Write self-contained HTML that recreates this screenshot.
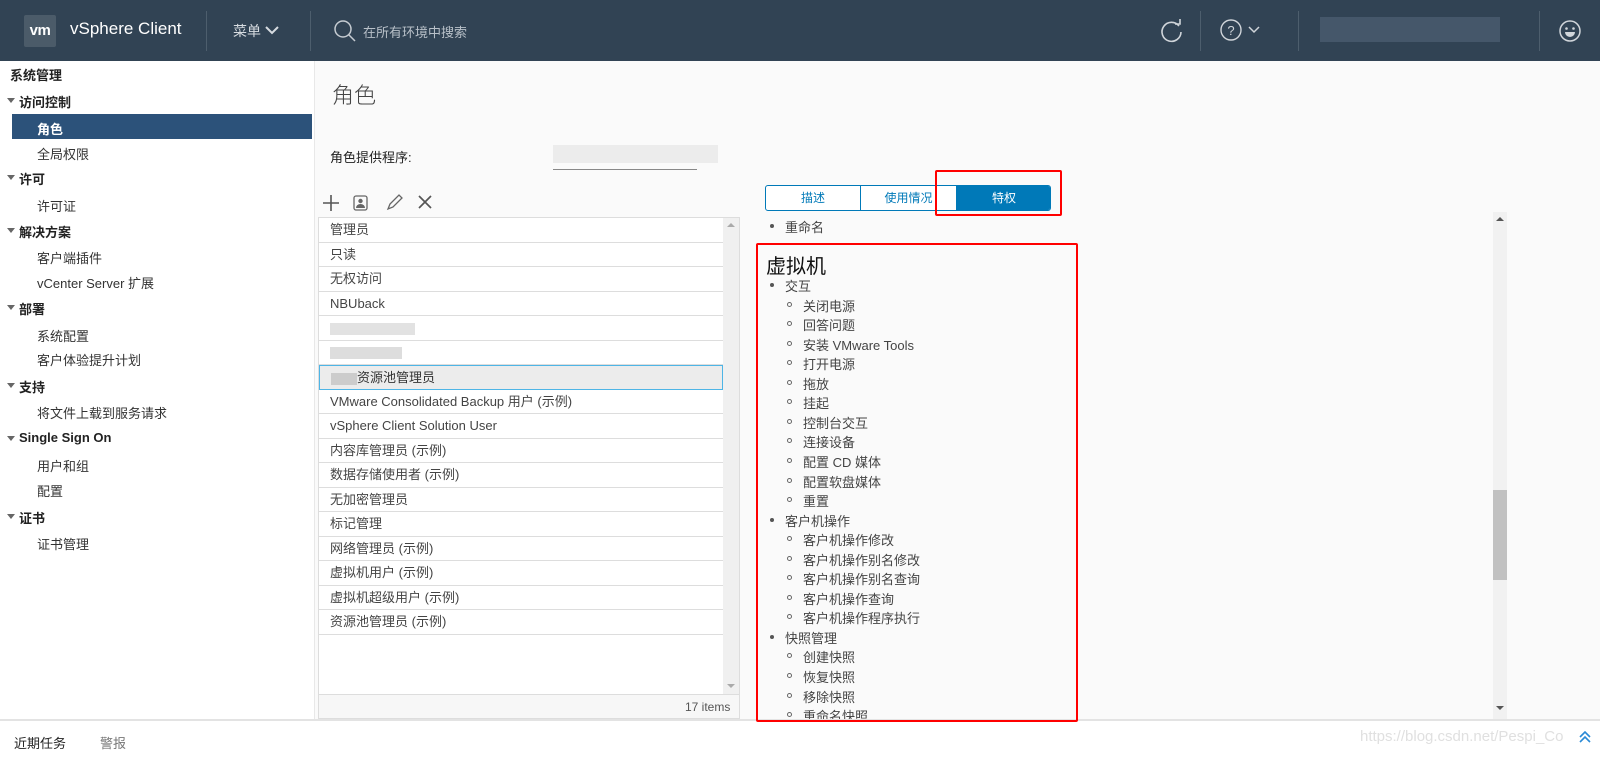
<!DOCTYPE html>
<html><head><meta charset="utf-8"><style>
*{margin:0;padding:0;box-sizing:border-box}
body{width:1600px;height:770px;overflow:hidden;background:#fafafa;font-family:"Liberation Sans","Noto Sans CJK SC",sans-serif;font-size:13px;color:#333;position:relative}
.a{position:absolute;white-space:nowrap}
#hd{position:absolute;left:0;top:0;width:1600px;height:61px;background:#314354}
.sep{position:absolute;top:11px;width:1px;height:40px;background:#4d5e6d}
#sb{position:absolute;left:0;top:61px;width:315px;height:659px;background:#fff;border-right:1px solid #e8e8e8}
.g{font-weight:bold;color:#222}
.tri{position:absolute;left:7px;width:0;height:0;border-left:4px solid transparent;border-right:4px solid transparent;border-top:5px solid #666}
.row{position:absolute;left:319px;width:404px;height:24.5px;border-bottom:1px solid #ddd;padding-left:11px;line-height:24px;color:#444;white-space:nowrap}
.li{position:absolute;white-space:nowrap;color:#444}
.dot{position:absolute;width:4px;height:4px;border-radius:2px;background:#555}
.cir{position:absolute;width:5px;height:5px;border-radius:3px;border:1px solid #666}
</style></head><body>
<div id="hd">
 <div class="a" style="left:24px;top:15px;width:32px;height:32px;background:#4b5b69;border-radius:2px;color:#fff;font-weight:bold;font-size:15px;text-align:center;line-height:31px;letter-spacing:-0.5px">vm</div>
 <div class="a" style="left:70px;top:19px;color:#fff;font-size:17px">vSphere Client</div>
 <div class="sep" style="left:206px"></div>
 <div class="a" style="left:233px;top:21px;color:#d6dbe0;font-size:14px">菜单</div>
 <svg class="a" style="left:265px;top:25px" width="14" height="10"><path d="M1 2l6 6 6-6" stroke="#d6dbe0" stroke-width="2" fill="none"/></svg>
 <div class="sep" style="left:310px"></div>
 <svg class="a" style="left:333px;top:19px" width="24" height="24"><circle cx="10" cy="10" r="8" stroke="#c6ccd2" stroke-width="1.5" fill="none"/><path d="M16 16l6 6" stroke="#c6ccd2" stroke-width="1.5"/></svg>
 <div class="a" style="left:363px;top:22px;color:#b8c0c8;font-size:13px">在所有环境中搜索</div>
 <svg class="a" style="left:1159px;top:18px" width="26" height="26"><path d="M20 8A9.5 9.5 0 1 0 22 14" stroke="#d0d5da" stroke-width="1.6" fill="none"/><path d="M16 6h5V1" stroke="#d0d5da" stroke-width="1.6" fill="none"/></svg>
 <div class="sep" style="left:1200px"></div>
 <svg class="a" style="left:1220px;top:19px" width="24" height="24"><circle cx="11" cy="11" r="10" stroke="#d0d5da" stroke-width="1.4" fill="none"/><text x="11" y="16" font-size="13" fill="#d0d5da" text-anchor="middle" font-family="Liberation Sans">?</text></svg>
 <svg class="a" style="left:1248px;top:26px" width="12" height="8"><path d="M1 1l5 5 5-5" stroke="#d0d5da" stroke-width="1.5" fill="none"/></svg>
 <div class="sep" style="left:1298px"></div>
 <div class="a" style="left:1320px;top:17px;width:180px;height:25px;background:#45576a"></div>
 <div class="sep" style="left:1539px"></div>
 <svg class="a" style="left:1558px;top:19px" width="24" height="24"><circle cx="12" cy="12" r="10" stroke="#d0d5da" stroke-width="1.5" fill="none"/><circle cx="8.5" cy="9.5" r="1.3" fill="#d0d5da"/><circle cx="15.5" cy="9.5" r="1.3" fill="#d0d5da"/><path d="M7 13h10a5 5 0 0 1-10 0z" fill="#d0d5da"/></svg>
</div>
<div id="sb">
 <div class="a g" style="left:10px;top:4px">系统管理</div>
 <div class="tri" style="top:37px"></div><div class="a g" style="left:19px;top:31px">访问控制</div>
 <div class="a" style="left:12px;top:53px;width:300px;height:25px;background:#2c527a"></div>
 <div class="a" style="left:37px;top:58px;color:#fff;font-weight:bold">角色</div>
 <div class="a" style="left:37px;top:83px">全局权限</div>
 <div class="tri" style="top:114px"></div><div class="a g" style="left:19px;top:108px">许可</div>
 <div class="a" style="left:37px;top:135px">许可证</div>
 <div class="tri" style="top:167px"></div><div class="a g" style="left:19px;top:161px">解决方案</div>
 <div class="a" style="left:37px;top:187px">客户端插件</div>
 <div class="a" style="left:37px;top:212px">vCenter Server 扩展</div>
 <div class="tri" style="top:244px"></div><div class="a g" style="left:19px;top:238px">部署</div>
 <div class="a" style="left:37px;top:265px">系统配置</div>
 <div class="a" style="left:37px;top:289px">客户体验提升计划</div>
 <div class="tri" style="top:322px"></div><div class="a g" style="left:19px;top:316px">支持</div>
 <div class="a" style="left:37px;top:342px">将文件上载到服务请求</div>
 <div class="tri" style="top:375px"></div><div class="a g" style="left:19px;top:369px">Single Sign On</div>
 <div class="a" style="left:37px;top:395px">用户和组</div>
 <div class="a" style="left:37px;top:420px">配置</div>
 <div class="tri" style="top:453px"></div><div class="a g" style="left:19px;top:447px">证书</div>
 <div class="a" style="left:37px;top:473px">证书管理</div>
</div>
<div class="a" style="left:332px;top:78px;font-size:22px;color:#444;font-weight:300">角色</div>
<div class="a" style="left:330px;top:147px;color:#222">角色提供程序:</div>
<div class="a" style="left:553px;top:145px;width:165px;height:18px;background:#ececec"></div>
<div class="a" style="left:553px;top:169px;width:144px;height:1px;background:#888"></div>
<svg class="a" style="left:322px;top:194px" width="120" height="18"><path d="M9 1v16M1 9h16" stroke="#555" stroke-width="1.6"/><rect x="32" y="2" width="13" height="14" rx="2" stroke="#666" fill="none" stroke-width="1.3"/><circle cx="38.5" cy="7" r="2.2" fill="#666"/><path d="M34 14a4.5 4 0 0 1 9 0z" fill="#666"/><path d="M66 15l2-5 9-9 3 3-9 9z" stroke="#666" fill="none" stroke-width="1.3"/><path d="M97 2l12 12M109 2L97 14" stroke="#555" stroke-width="1.7"/></svg>
<div class="a" style="left:318px;top:217px;width:422px;height:502px;background:#fff;border:1px solid #ddd"></div>
<div class="a" style="left:723px;top:218px;width:16px;height:478px;background:#f0f0f0"></div>
<div class="a" style="left:319px;top:694px;width:420px;height:24px;background:#f7f7f7;border-top:1px solid #ddd"></div>
<div class="a" style="left:685px;top:700px;color:#555;font-size:12px">17 items</div>
<div class="row" style="top:218px">管理员</div>
<div class="row" style="top:242.5px">只读</div>
<div class="row" style="top:267px">无权访问</div>
<div class="row" style="top:291.5px">NBUback</div>
<div class="row" style="top:316px"><span style="display:inline-block;width:85px;height:12px;background:#e2e2e2;vertical-align:middle"></span></div>
<div class="row" style="top:340.5px"><span style="display:inline-block;width:72px;height:12px;background:#ddd;vertical-align:middle"></span></div>
<div class="row" style="top:365px;background:#ececec;border:1px solid #4eb5e6;color:#333"><span style="display:inline-block;width:26px;height:12px;background:#ccc;vertical-align:middle"></span>资源池管理员</div>
<div class="row" style="top:389.5px">VMware Consolidated Backup 用户 (示例)</div>
<div class="row" style="top:414px">vSphere Client Solution User</div>
<div class="row" style="top:438.5px">内容库管理员 (示例)</div>
<div class="row" style="top:463px">数据存储使用者 (示例)</div>
<div class="row" style="top:487.5px">无加密管理员</div>
<div class="row" style="top:512px">标记管理</div>
<div class="row" style="top:536.5px">网络管理员 (示例)</div>
<div class="row" style="top:561px">虚拟机用户 (示例)</div>
<div class="row" style="top:585.5px">虚拟机超级用户 (示例)</div>
<div class="row" style="top:610px">资源池管理员 (示例)</div>
<div class="a" style="left:765px;top:185px;width:286px;height:26px;border:1px solid #0079b8;border-radius:3px;background:#fff;overflow:hidden">
 <div class="a" style="left:0;top:0;width:95px;height:24px;line-height:24px;text-align:center;color:#0079b8;font-size:12px;border-right:1px solid #0079b8">描述</div>
 <div class="a" style="left:95px;top:0;width:95px;height:24px;line-height:24px;text-align:center;color:#0079b8;font-size:12px">使用情况</div>
 <div class="a" style="left:190px;top:0;width:96px;height:24px;line-height:24px;text-align:center;color:#fff;background:#0079b8;font-size:12px">特权</div>
</div>
<div class="a" style="left:1493px;top:212px;width:14px;height:507px;background:#f1f1f1"></div>
<div class="a" style="left:1493px;top:490px;width:14px;height:90px;background:#c1c1c1"></div>
<svg class="a" style="left:1496px;top:216px" width="8" height="500"><path d="M0 5l4-4 4 4z" fill="#555"/><path d="M0 490l4 4 4-4z" fill="#555"/></svg>
<svg class="a" style="left:727px;top:222px" width="8" height="470"><path d="M0 5l4-4 4 4z" fill="#aaa"/><path d="M0 462l4 4 4-4z" fill="#aaa"/></svg>
<div class="dot" style="left:770px;top:224px"></div><div class="li" style="left:785px;top:217px">重命名</div>
<div class="li" style="left:766px;top:250px;font-size:20px;color:#111">虚拟机</div>
<div id="pl"></div>
<div class="a" style="left:0;top:719px;width:1600px;height:51px;background:#fff;border-top:2px solid #e3e3e3"></div>
<div class="a" style="left:14px;top:733px;color:#222">近期任务</div>
<div class="a" style="left:100px;top:733px;color:#777">警报</div>
<div class="a" style="left:1360px;top:728px;color:#e0e0e0;font-size:15px">https://blog.csdn.net/Pespi_Co</div>
<svg class="a" style="left:1579px;top:731px" width="12" height="12"><path d="M1 6l5-5 5 5M1 11l5-5 5 5" stroke="#2b8ad6" stroke-width="1.6" fill="none"/></svg>
<div class="a" style="left:935px;top:170px;width:127px;height:46px;border:2px solid #f00;border-radius:2px"></div>
<div class="a" style="left:756px;top:243px;width:322px;height:479px;border:2px solid #f00;border-radius:2px"></div>
<script>
var items=[[0,'交互'],[1,'关闭电源'],[1,'回答问题'],[1,'安装 VMware Tools'],[1,'打开电源'],[1,'拖放'],[1,'挂起'],[1,'控制台交互'],[1,'连接设备'],[1,'配置 CD 媒体'],[1,'配置软盘媒体'],[1,'重置'],[0,'客户机操作'],[1,'客户机操作修改'],[1,'客户机操作别名修改'],[1,'客户机操作别名查询'],[1,'客户机操作查询'],[1,'客户机操作程序执行'],[0,'快照管理'],[1,'创建快照'],[1,'恢复快照'],[1,'移除快照'],[1,'重命名快照']];
var h='';items.forEach(function(it,i){var y=276+i*19.55;if(it[0]==0){h+='<div class="dot" style="left:770px;top:'+(y+7)+'px"></div><div class="li" style="left:785px;top:'+y+'px">'+it[1]+'</div>'}else{h+='<div class="cir" style="left:787px;top:'+(y+6)+'px"></div><div class="li" style="left:803px;top:'+y+'px">'+it[1]+'</div>'}});
document.getElementById('pl').innerHTML=h;
</script>
</body></html>
